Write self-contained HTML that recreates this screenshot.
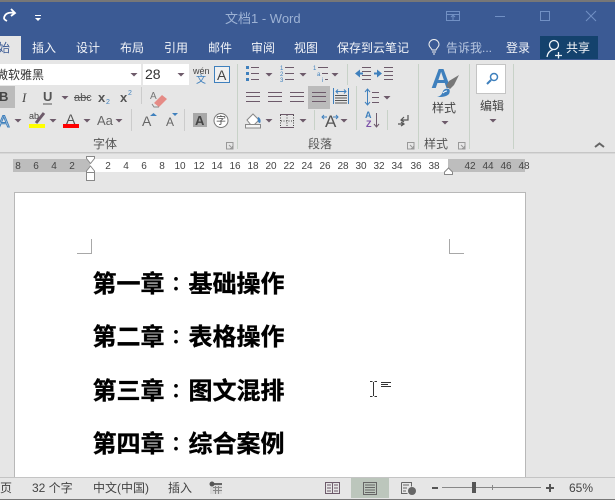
<!DOCTYPE html>
<html><head><meta charset="utf-8"><style>
html,body{margin:0;padding:0;width:615px;height:500px;overflow:hidden;background:#e6e6e6}
svg{display:block}
text{font-family:"Liberation Sans","Noto Sans CJK SC",sans-serif}
.tab{font-size:12px;fill:#f2f4f8}
.lb{font-size:12px;fill:#555}
.r{font-size:10px;fill:#444;text-anchor:middle;font-family:"Liberation Sans",sans-serif}
.h{font-size:24px;font-weight:700;fill:#000;stroke:#000;stroke-width:.35px}
.c{font-size:20px;font-weight:700;fill:#000;text-anchor:middle;font-family:"Noto Sans CJK TC",sans-serif}
.st{font-size:12px;fill:#444}
.ln{stroke:#6d5a6a;stroke-width:1;fill:none}
.bl{stroke:#3f80bd;fill:none}
</style></head><body>
<svg width="615" height="500" viewBox="0 0 615 500" xmlns="http://www.w3.org/2000/svg">
<defs><path id="ar" d="M-3.500 0h7l-3.500 3.500z" fill="#6d5a6a"/>
<path id="lau" d="M.5.5h6.500v6.500h-6.500zM3 3l3.500 3.500M6.500 4v2.500h-2.500" fill="none" stroke="#999" stroke-width="1"/></defs>
<rect width="615" height="500" fill="#e6e6e6"/>
<rect width="615" height="60" fill="#3b5a94"/>
<rect width="615" height="2" fill="#777"/>
<rect y="36" width="21" height="24" fill="#e6e6e6"/>
<text x="-2" y="52" font-size="12" fill="#3b5a94">始</text>
<path d="M4 18c1-5 5-6 11-5M11 9l4 4-4 3M4 18c0 1 1 2 3 3" fill="none" stroke="#fff" stroke-width="1.800"/>
<path d="M35 15.500h6" stroke="#fff"/><path d="M35 18h6l-3 3z" fill="#fff"/>
<text x="225" y="23" font-size="13" fill="#9db2d4">文档1 - Word</text>
<g stroke="#7190c4" fill="none"><rect x="446.500" y="11.500" width="13" height="9"/><path d="M446 14.500h14M453 20v-4M451 17l2-2 2 2"/><path d="M495 16.500h10"/><rect x="540.500" y="11.500" width="9" height="9"/><path d="M586 11l10 10M596 11l-10 10"/></g>
<g class="tab"><text class="tab" x="32" y="52">插入</text><text class="tab" x="76" y="52">设计</text><text class="tab" x="120" y="52">布局</text><text class="tab" x="164" y="52">引用</text><text class="tab" x="208" y="52">邮件</text><text class="tab" x="251" y="52">审阅</text><text class="tab" x="294" y="52">视图</text><text class="tab" x="337" y="52">保存到云笔记</text><text x="446" y="52" font-size="12" fill="#b7c6e0">告诉我...</text><text class="tab" x="506" y="52">登录</text></g>
<path d="M432 50c-.5-2-3-3-3-5.500a5 5 0 0 1 10 0c0 2.500-2.500 3.500-3 5.500zM432 52h4M433 54h2" fill="none" stroke="#f0f0f0"/>
<rect x="540" y="36" width="58" height="23" fill="#14426d"/>
<circle cx="554" cy="45" r="4.500" fill="none" stroke="#f0f4f8" stroke-width="1.300"/>
<path d="M547 57c.5-4 3-6.500 6-7.500M558.500 52v6.500M555 55.500h7" fill="none" stroke="#f0f4f8" stroke-width="1.300"/>
<text x="566" y="52" font-size="12" fill="#f4f6f9">共享</text>

<!-- ribbon font -->
<rect x="0" y="64" width="141" height="21" fill="#fff"/><rect x="143" y="64" width="46" height="21" fill="#fff"/>
<text x="-4" y="79" font-size="12" fill="#333">微软雅黑</text><use href="#ar" x="134" y="73"/>
<text x="145" y="79" font-size="14" fill="#333">28</text><use href="#ar" x="181" y="73"/>
<text x="193" y="74" font-size="9" fill="#444">wén</text><text x="196" y="83" font-size="10" fill="#3f80bd">文</text>
<rect x="214.500" y="66.500" width="15" height="16" fill="#f0f0f0" stroke="#3f80bd"/><text x="217" y="80" font-size="14" fill="#444">A</text>
<rect x="0" y="86" width="15" height="22" fill="#bbb"/><text x="-1" y="101" font-size="13" font-weight="700" fill="#444">B</text>
<text x="22" y="102" font-size="13" font-style="italic" fill="#444" style="font-family:'Liberation Serif'">I</text>
<text x="43" y="101" font-size="13" font-weight="700" fill="#555">U</text><path d="M43 104h9" stroke="#555"/><use href="#ar" x="65" y="96"/>
<text x="74" y="101" font-size="11" fill="#555">abc</text><path d="M74 97.500h16" stroke="#555"/>
<text x="98" y="102" font-size="13" font-weight="700" fill="#555">x</text><text x="106" y="104" font-size="7" fill="#3f80bd">2</text>
<text x="120" y="102" font-size="13" font-weight="700" fill="#555">x</text><text x="128" y="95" font-size="7" fill="#3f80bd">2</text>
<path d="M141.500 87v17M131.500 109v22M184.500 109v22" stroke="#ccc"/>
<text x="150" y="99" font-size="10" fill="#777">A</text><path d="M154 103l8-8 5 4-8 8z" fill="#e58b86"/><path d="M152 104l2 3h5" stroke="#888" fill="none"/>
<text x="-2" y="127" font-size="17" fill="#e6e6e6" stroke="#3f80bd">A</text><use href="#ar" x="18" y="119"/>
<text x="29" y="119" font-size="9" fill="#444">ab</text><path d="M36 123l8-10" stroke="#6d5a6a" stroke-width="3"/><rect x="29" y="124" width="16" height="4" fill="#ff0"/><use href="#ar" x="53" y="119"/>
<text x="66" y="124" font-size="14" fill="#555">A</text><rect x="63" y="124" width="16" height="4" fill="#f00"/><use href="#ar" x="87" y="119"/>
<text x="97" y="125" font-size="13" fill="#666">Aa</text><use href="#ar" x="119" y="119"/>
<text x="142" y="126" font-size="14" fill="#666">A</text><path d="M150 116h7l-3.500-3z" fill="#3f80bd"/>
<text x="166" y="126" font-size="12" fill="#666">A</text><path d="M172 113h6l-3 3z" fill="#3f80bd"/>
<rect x="193" y="113" width="14" height="14" fill="#a8a8a8"/><text x="195" y="125" font-size="13" font-weight="700" fill="#444">A</text>
<circle cx="221" cy="120.500" r="7" fill="#fff" stroke="#777"/><text x="216" y="124" font-size="10" fill="#444">字</text>
<text class="lb" x="93" y="148">字体</text><use href="#lau" x="226" y="142"/>
<path d="M237.500 64v85M418.500 64v85M469.500 64v85M513.500 64v85" stroke="#c8d2c8"/>

<!-- paragraph -->
<g class="ln"><path d="M251 67.500h8M251 73.500h8M251 79.500h8M285 67.500h9M285 73.500h9M285 79.500h9M318 67.500h10M322 73.500h6M325 79.500h3"/></g>
<path d="M246 66h3v3h-3zM246 72h3v3h-3zM246 78h3v3h-3z" fill="#3f80bd"/>
<text x="280" y="70" font-size="6" fill="#3f80bd">1</text><text x="280" y="76" font-size="6" fill="#3f80bd">2</text><text x="280" y="82" font-size="6" fill="#3f80bd">3</text>
<text x="313" y="70" font-size="6" fill="#3f80bd">1</text><text x="317" y="76" font-size="6" fill="#3f80bd">a</text><text x="322" y="82" font-size="6" fill="#3f80bd">i</text>
<use href="#ar" x="269" y="73"/><use href="#ar" x="303" y="73"/><use href="#ar" x="335" y="73"/>
<path d="M347.500 64v21M356.500 86v24M314.500 110v20M356.500 110v20M387.500 110v20" stroke="#c8d2c8"/>
<g class="ln"><path d="M362 67.500h9M362 71.500h9M362 75.500h9M362 79.500h9M384 67.500h9M384 71.500h9M384 75.500h9M384 79.500h9"/></g>
<path d="M355 73.500l5-4v3h3v2h-3v3zM382 73.500l-5-4v3h-3v2h3v3z" fill="#3f80bd"/>
<rect x="308" y="86" width="22" height="23" fill="#bbb"/>
<g class="ln"><path d="M246 92.500h14M246 96.500h14M246 101.500h14M268 92.500h14M268 96.500h14M268 101.500h14M290 92.500h14M290 96.500h14M290 101.500h14M312 92.500h14M312 96.500h14M312 101.500h14"/></g>
<path d="M333.500 88v16M348.500 88v16" stroke="#3f80bd"/><path d="M336 91.500h10M338 89.500l-2 2 2 2M344 89.500l2 2-2 2" class="bl"/><path d="M335 95.500h12M335 98h12M335 100.500h12M335 103h12" stroke="#555"/>
<path d="M367.500 89v16M365 92l2.500-3 2.500 3M365 102l2.500 3 2.500-3" class="bl"/><path d="M372 92.500h7M372 97.500h7M372 102.500h7" class="ln"/><use href="#ar" x="387" y="96"/>
<path d="M247 120l6-6 6 6-5 5h-3z" fill="#fff" stroke="#888"/><path d="M258 117c3 1 3 5 2 6-2 0-3-3-2-6z" fill="#3f80bd"/><rect x="245.500" y="124.500" width="15" height="3.500" fill="#f4f4f4" stroke="#888"/><use href="#ar" x="269" y="119"/>
<path d="M280 114.500h14M280 127.500h14" stroke="#6d5a6a"/><path d="M280.500 115v12M287 115v12M293.500 115v12M281 121h13" stroke="#444" stroke-dasharray="1 1.500"/><use href="#ar" x="303" y="119"/>
<text x="325" y="127" font-size="17" fill="#555">A</text><path d="M322 117h5M324 115l-2 2 2 2M338 117h-5M336 115l2 2-2 2" class="bl"/><use href="#ar" x="344" y="119"/>
<text x="365" y="118" font-size="9" fill="#3f80bd" font-weight="700">A</text><text x="366" y="127" font-size="9" fill="#7a4fa8" font-weight="700">Z</text><path d="M376.500 113v14M374 124l2.500 3 2.500-3" class="ln"/>
<path d="M408 115v5h-7M404 117l-3 3 3 2M398 124h6M401 122l3 2-3 2" fill="none" stroke="#555" stroke-width="1.200"/>
<text class="lb" x="308" y="148">段落</text><use href="#lau" x="407" y="142"/>

<!-- styles -->
<text x="431" y="88" font-size="28" font-weight="700" fill="#3f80bd">A</text>
<path d="M459 75l-10 6-3 5 4 3 4-4z" fill="#777"/><path d="M437 97c4-1 5-3 6-6 1-2 4-3 6-2 1 1 1 3 0 5-3 3-7 3-12 3z" fill="#3f80bd"/><path d="M443 93c1-1 3-2 4-2" stroke="#fff" fill="none"/>
<text x="432" y="112" font-size="12" fill="#444">样式</text><use href="#ar" x="445" y="121"/>
<text class="lb" x="424" y="148">样式</text><use href="#lau" x="458" y="142"/>
<rect x="476.500" y="64.500" width="29" height="29" fill="#fff" stroke="#c4c4c4"/>
<circle cx="494" cy="77" r="3.500" fill="none" stroke="#3f80bd" stroke-width="1.500"/><path d="M491 80l-4 4" stroke="#3f80bd" stroke-width="2"/>
<text x="480" y="110" font-size="12" fill="#444">编辑</text><use href="#ar" x="493" y="119"/>
<path d="M595 147l4.500-3.500 4.500 3.500" fill="none" stroke="#666" stroke-width="2"/>
<rect y="152" width="615" height="1" fill="#c6c6c6"/><rect y="153" width="615" height="1" fill="#d8d8d8"/>

<!-- ruler -->
<rect x="13" y="159" width="77" height="13" fill="#bdbdbd"/><rect x="90" y="159" width="358" height="13" fill="#fff"/><rect x="448" y="159" width="77" height="13" fill="#bdbdbd"/>
<g><text class="r" x="18" y="169">8</text><text class="r" x="36" y="169">6</text><text class="r" x="54" y="169">4</text><text class="r" x="72" y="169">2</text><text class="r" x="108" y="169">2</text><text class="r" x="126" y="169">4</text><text class="r" x="144" y="169">6</text><text class="r" x="162" y="169">8</text><text class="r" x="180" y="169">10</text><text class="r" x="199" y="169">12</text><text class="r" x="217" y="169">14</text><text class="r" x="235" y="169">16</text><text class="r" x="253" y="169">18</text><text class="r" x="271" y="169">20</text><text class="r" x="289" y="169">22</text><text class="r" x="307" y="169">24</text><text class="r" x="325" y="169">26</text><text class="r" x="343" y="169">28</text><text class="r" x="361" y="169">30</text><text class="r" x="379" y="169">32</text><text class="r" x="397" y="169">34</text><text class="r" x="416" y="169">36</text><text class="r" x="434" y="169">38</text><text class="r" x="470" y="169">42</text><text class="r" x="488" y="169">44</text><text class="r" x="506" y="169">46</text><text class="r" x="524" y="169">48</text></g>
<path d="M86.500 156.500h8v2l-4 5-4-5zM90.500 166l4 5v9.500h-8v-9.500zM86.500 172.500h8" fill="#fff" stroke="#888"/>
<path d="M448.500 168l4 4v2.500h-8v-2.500z" fill="#fff" stroke="#888"/>

<!-- page -->
<rect x="14.500" y="192.500" width="511" height="300" fill="#fff" stroke="#b8b8b8"/>
<path d="M77 253.500h14.500V239M464 253.500h-14.500V239" fill="none" stroke="#a8a8a8"/>
<text class="h" x="92.500" y="292">第一章</text><text class="c" x="176" y="291">：</text><text class="h" x="188.500" y="292">基础操作</text>
<text class="h" x="92.500" y="345">第二章</text><text class="c" x="176" y="344">：</text><text class="h" x="188.500" y="345">表格操作</text>
<text class="h" x="92.500" y="399">第三章</text><text class="c" x="176" y="398">：</text><text class="h" x="188.500" y="399">图文混排</text>
<text class="h" x="92.500" y="452">第四章</text><text class="c" x="176" y="451">：</text><text class="h" x="188.500" y="452">综合案例</text>
<path d="M370 381.500h2.500M374.500 381.500h2.500M373.500 382v14M370 396.500h2.500M374.500 396.500h2.500M381 382.500h10M381 384.500h7M381 386.500h10" stroke="#333" fill="none"/>

<!-- status -->
<rect y="477" width="615" height="22" fill="#e6e6e6"/><rect y="477" width="615" height="1" fill="#c4c4c4"/><rect y="499" width="615" height="1" fill="#777"/>
<text class="st" x="0" y="492">页</text><text class="st" x="32" y="492">32 个字</text><text class="st" x="93" y="492">中文(中国)</text><text class="st" x="168" y="492">插入</text>
<rect x="210" y="483" width="12" height="11" fill="#d8d8d8"/><rect x="213" y="483" width="9" height="2" fill="#666"/><circle cx="212" cy="484" r="2.500" fill="#555"/><path d="M213 487.500h9M213 490.500h9M215.500 486v8M218.500 486v8" stroke="#888"/>
<path d="M325.500 482.500h6.500l.5 1 .5-1h6.500v11h-7.500-6.500zM332.500 483v10M327 485h4M327 488h4M327 491h4M334 485h4M334 488h4M334 491h4" fill="none" stroke="#6d5a6a"/>
<rect x="351" y="478" width="38" height="20" fill="#bcc6bc"/>
<rect x="363.500" y="482.500" width="13" height="12" fill="none" stroke="#666"/><path d="M365 485h10M365 487.500h10M365 490h10M365 492.500h10" stroke="#666"/>
<path d="M401.500 482.500h10v4M401.500 482.500v11h6M403 485h6M403 488h4M403 491h3" fill="none" stroke="#666"/><circle cx="412" cy="491" r="4" fill="#666"/>
<path d="M432 488h6M546 488h8M550 484v8" stroke="#555" stroke-width="2"/>
<path d="M442 487.500h99M492.500 485v5" stroke="#888"/><rect x="472" y="482" width="4" height="11" fill="#555"/>
<text class="st" x="569" y="492" font-size="12">65%</text>
</svg>
</body></html>
